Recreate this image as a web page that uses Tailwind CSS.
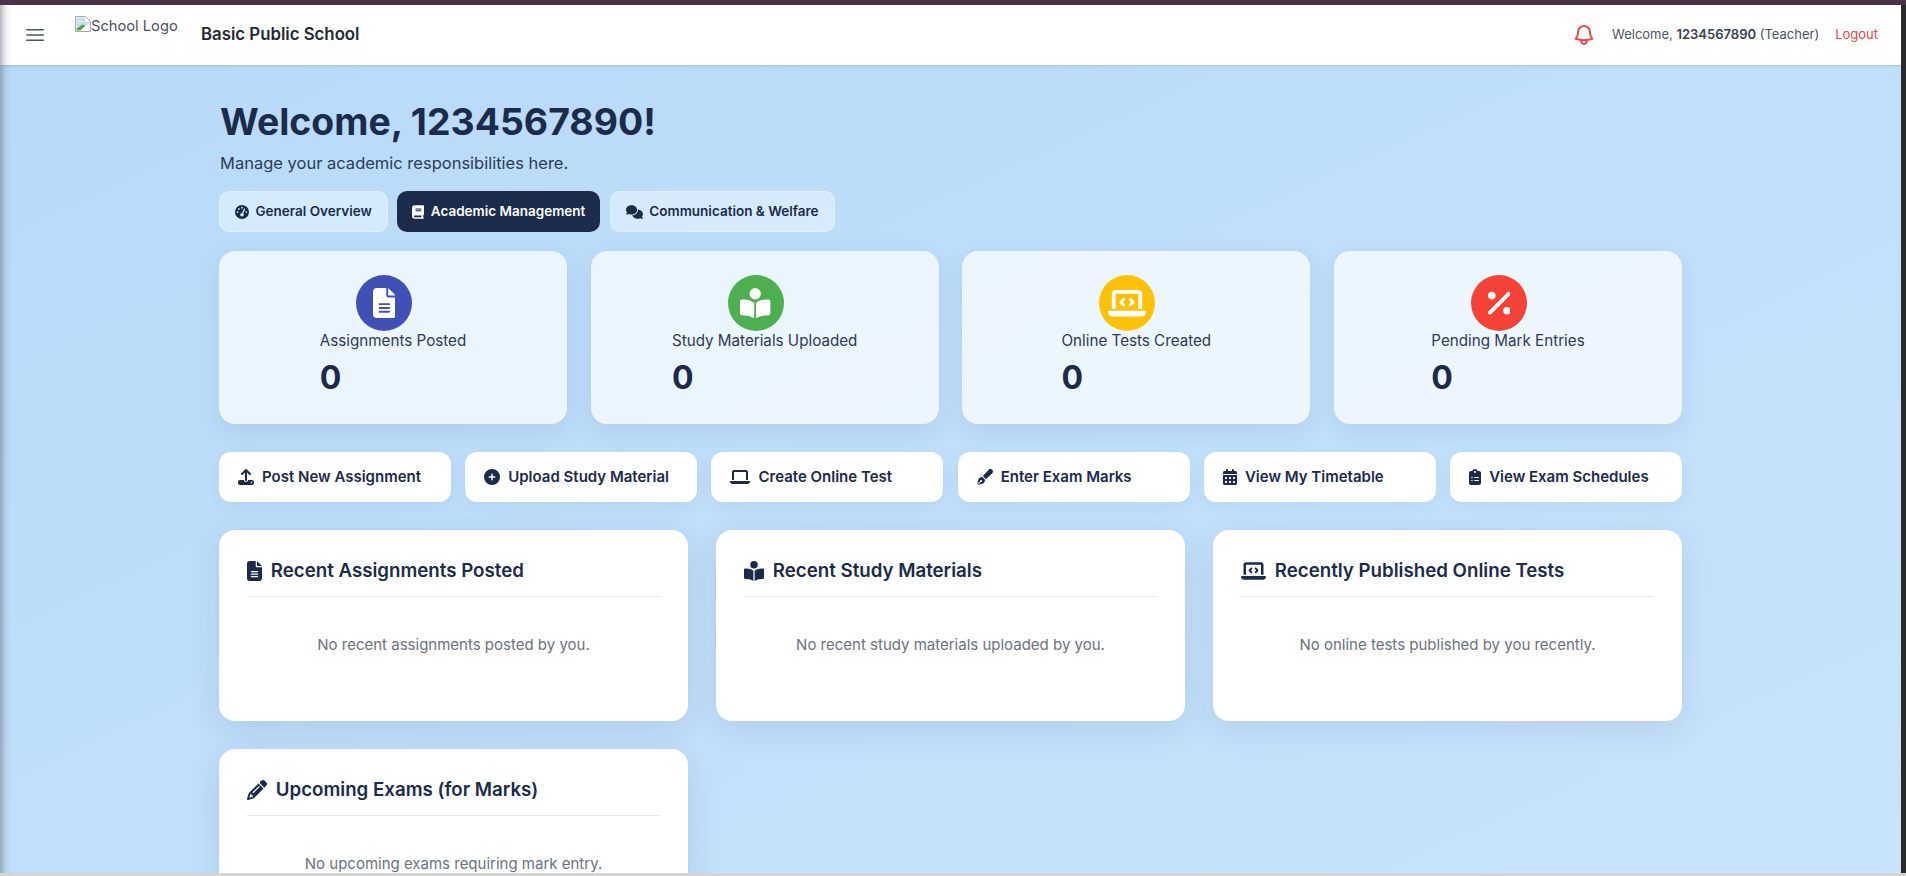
<!DOCTYPE html>
<html lang="en">
  <head>
    <meta charset="UTF-8" />
    <meta name="viewport" content="width=device-width, initial-scale=1.0" />
    <script src="https://cdn.jsdelivr.net/npm/@tailwindcss/browser@4"></script>
    <title>Teacher Dashboard</title>
  </head>
  <body class="h-screen overflow-hidden bg-[#2b2b2b] font-['Inter',sans-serif]">
    <div class="h-[5px] bg-[#4a3349]"></div>
    <div class="flex h-[868px] pr-[5px]">
      <div class="relative flex-1 overflow-hidden bg-gradient-to-br from-[#b6daf9] to-[#c8e4fc]">
        <div class="absolute inset-y-0 left-0 z-20 w-[12px] bg-gradient-to-r from-gray-500/50 via-gray-500/10 to-transparent"></div>

        <!-- Top bar -->
        <header class="relative z-10 flex h-[60px] items-center justify-between bg-white pl-[22.5px] pr-[23px] shadow-sm">
          <div class="flex h-full items-center">
            <svg class="h-6 w-6 text-[#4b5563]" fill="none" viewBox="0 0 24 24" stroke="currentColor" stroke-width="1.5">
              <path stroke-linecap="round" stroke-linejoin="round" d="M3.75 6.75h16.5M3.75 12h16.5m-16.5 5.25h16.5" />
            </svg>
            <div class="ml-[28.5px] flex h-full w-[126px] items-start pt-[11px] text-[14.7px] leading-[20px] text-[#4b5563]">
              <svg class="h-4 w-4 shrink-0" viewBox="0 0 16 16">
                <path d="M.5.5h10l5 5v10H.5z" fill="#fff" stroke="#a8a8a8" />
                <path d="M1.5 1.5h8.5v4.5h4.5v2L1.5 12z" fill="#c5dcf7" />
                <path d="M1.5 14.5v-2l6-4 3 1-5 5z" fill="#4fa63a" />
                <path d="M3 6c1-1.6 3.4-1.6 4.5 0z" fill="#fff" />
              </svg>
              <span>School Logo</span>
            </div>
            <span class="text-[16.8px] font-semibold text-[#1f2937]">Basic Public School</span>
          </div>
          <div class="flex items-center">
            <svg class="h-6 w-6 text-[#ef4444]" fill="none" viewBox="0 0 24 24" stroke="currentColor" stroke-width="2">
              <path stroke-linecap="round" stroke-linejoin="round" d="M14.857 17.082a23.848 23.848 0 005.454-1.31A8.967 8.967 0 0118 9.75v-.7V9A6 6 0 006 9v.75a8.967 8.967 0 01-2.312 6.022c1.733.64 3.56 1.085 5.455 1.31m5.714 0a24.255 24.255 0 01-5.714 0m5.714 0a3 3 0 11-5.714 0" />
            </svg>
            <span class="ml-4 text-[13px] text-[#4b5563]">Welcome, <b class="font-semibold text-[#374151]">1234567890</b> (Teacher)</span>
            <a class="ml-4 text-[13px] text-[#ef4444]">Logout</a>
          </div>
        </header>

        <!-- Main -->
        <main class="mx-auto w-[1463px] pt-[33px]">
          <h1 class="pl-px text-[37.4px] font-bold leading-[48px] text-[#1a2b4c]">Welcome, 1234567890!</h1>
          <p class="mt-[5px] pl-px text-[16.5px] leading-[24px] text-[#2d3a5a]">Manage your academic responsibilities here.</p>

          <div class="mt-[16px] flex gap-[9.6px]">
            <button class="flex h-[41px] items-center gap-[6.4px] rounded-[10px] border border-white/30 bg-white/40 px-[15px] text-[13.5px] font-semibold text-[#1a2b4c]">
              <svg class="h-[14px] w-[14px]" viewBox="0 0 512 512" fill="currentColor"><path d="M0 256a256 256 0 1 1 512 0A256 256 0 1 1 0 256zM288 96a32 32 0 1 0 -64 0 32 32 0 1 0 64 0zM256 416c35.3 0 64-28.7 64-64c0-17.4-6.9-33.1-18.1-44.6L366 161.7c5.3-12.1-.2-26.3-12.3-31.6s-26.3 .2-31.6 12.3L257.9 288c-.6 0-1.3 0-1.9 0c-35.3 0-64 28.7-64 64s28.7 64 64 64zM176 144a32 32 0 1 0 -64 0 32 32 0 1 0 64 0zM96 288a32 32 0 1 0 0-64 32 32 0 1 0 0 64zm352-32a32 32 0 1 0 -64 0 32 32 0 1 0 64 0z" /></svg>
              General Overview
            </button>
            <button class="flex h-[41px] items-center gap-[6.4px] rounded-[10px] bg-[#1a2b4c] px-[15px] text-[13.5px] font-semibold text-white">
              <svg class="h-[14px] w-[12px]" viewBox="0 0 448 512" fill="currentColor"><path d="M96 0C43 0 0 43 0 96V416c0 53 43 96 96 96H384h32c17.7 0 32-14.3 32-32s-14.3-32-32-32V384c17.7 0 32-14.3 32-32V32c0-17.7-14.3-32-32-32H384 96zm0 384H352v64H96c-17.7 0-32-14.3-32-32s14.3-32 32-32zm32-240c0-8.8 7.2-16 16-16H336c8.8 0 16 7.2 16 16s-7.2 16-16 16H144c-8.8 0-16-7.2-16-16zm16 48H336c8.8 0 16 7.2 16 16s-7.2 16-16 16H144c-8.8 0-16-7.2-16-16s7.2-16 16-16z" /></svg>
              Academic Management
            </button>
            <button class="flex h-[41px] items-center gap-[6.4px] rounded-[10px] border border-white/30 bg-white/40 px-[15px] text-[13.5px] font-semibold text-[#1a2b4c]">
              <svg class="h-[14px] w-[17px]" viewBox="0 0 640 512" fill="currentColor"><path d="M208 352c114.9 0 208-78.8 208-176S322.9 0 208 0S0 78.8 0 176c0 38.6 14.7 74.3 39.6 103.4c-3.5 9.4-8.7 17.7-14.2 24.7c-4.8 6.2-9.7 11-13.3 14.3c-1.8 1.6-3.3 2.9-4.3 3.7c-.5 .4-.9 .7-1.1 .8l-.2 .2 0 0 0 0C1 327.2-1.4 334.4 .8 340.9S9.1 352 16 352c21.8 0 43.8-5.6 62.1-12.5c9.2-3.5 17.8-7.4 25.3-11.4C134.1 343.3 169.8 352 208 352zM448 176c0 112.3-99.1 196.9-216.5 207C255.8 457.4 336.4 512 432 512c38.2 0 73.9-8.7 104.7-23.9c7.5 4 16 7.9 25.2 11.4c18.3 6.9 40.3 12.5 62.1 12.5c6.9 0 13.1-4.5 15.2-11.1c2.1-6.6-.2-13.8-5.8-17.9l0 0 0 0-.2-.2c-.2-.2-.6-.4-1.1-.8c-1-.8-2.5-2-4.3-3.7c-3.6-3.3-8.5-8.1-13.3-14.3c-5.5-7-10.7-15.4-14.2-24.7c24.9-29 39.6-64.7 39.6-103.4c0-92.8-84.9-168.9-192.6-175.5c.4 5.1 .6 10.3 .6 15.5z" /></svg>
              Communication &amp; Welfare
            </button>
          </div>

          <!-- Stat cards -->
          <div class="mt-[19px] grid grid-cols-4 gap-[23.6px]">
            <div class="flex h-[173px] justify-center rounded-[16px] bg-white/70 pt-[24px] shadow-[0_8px_24px_rgba(26,43,76,0.09)]">
              <div class="flex w-fit flex-col">
                <div class="flex h-14 w-14 items-center justify-center self-center rounded-full bg-[#3f51b5] mr-[18px] text-white">
                  <svg class="h-[30.4px] w-[22.8px]" viewBox="0 0 384 512" fill="currentColor"><path d="M64 0C28.7 0 0 28.7 0 64V448c0 35.3 28.7 64 64 64H320c35.3 0 64-28.7 64-64V160H256c-17.7 0-32-14.3-32-32V0H64zM256 0V128H384L256 0zM112 256H272c8.8 0 16 7.2 16 16s-7.2 16-16 16H112c-8.8 0-16-7.2-16-16s7.2-16 16-16zm0 64H272c8.8 0 16 7.2 16 16s-7.2 16-16 16H112c-8.8 0-16-7.2-16-16s7.2-16 16-16zm0 64H272c8.8 0 16 7.2 16 16s-7.2 16-16 16H112c-8.8 0-16-7.2-16-16s7.2-16 16-16z" /></svg>
                </div>
                <span class="text-[15.2px] leading-[19px] text-[#2d3a5a]">Assignments Posted</span>
                <span class="mt-[8px] text-[32px] font-bold leading-[40px] text-[#1a2b4c]">0</span>
              </div>
            </div>
            <div class="flex h-[173px] justify-center rounded-[16px] bg-white/70 pt-[24px] shadow-[0_8px_24px_rgba(26,43,76,0.09)]">
              <div class="flex w-fit flex-col">
                <div class="flex h-14 w-14 items-center justify-center self-center rounded-full bg-[#4caf50] mr-[18px] text-white">
                  <svg class="h-[30.4px] w-[30.4px]" viewBox="0 0 512 512" fill="currentColor"><path d="M160 96a96 96 0 1 1 192 0A96 96 0 1 1 160 96zm80 152V512l-48.4-24.2c-20.9-10.4-43.5-17-66.8-19.3l-96-9.6C12.5 457.2 0 443.5 0 427V224c0-17.7 14.3-32 32-32H62.3c63.6 0 125.6 19.6 177.7 56zm32 264V248c52.1-36.4 114.1-56 177.7-56H480c17.7 0 32 14.3 32 32V427c0 16.4-12.5 30.2-28.8 31.8l-96 9.6c-23.2 2.3-45.9 8.9-66.8 19.3L272 512z" /></svg>
                </div>
                <span class="text-[15.2px] leading-[19px] text-[#2d3a5a]">Study Materials Uploaded</span>
                <span class="mt-[8px] text-[32px] font-bold leading-[40px] text-[#1a2b4c]">0</span>
              </div>
            </div>
            <div class="flex h-[173px] justify-center rounded-[16px] bg-white/70 pt-[24px] shadow-[0_8px_24px_rgba(26,43,76,0.09)]">
              <div class="flex w-fit flex-col">
                <div class="flex h-14 w-14 items-center justify-center self-center rounded-full bg-[#ffc107] mr-[18px] text-white">
                  <svg class="h-[30.4px] w-[38px]" viewBox="0 0 640 512" fill="currentColor"><path d="M64 96c0-35.3 28.7-64 64-64H512c35.3 0 64 28.7 64 64V352H512V96H128V352H64V96zM0 403.2C0 392.6 8.6 384 19.2 384H620.8c10.6 0 19.2 8.6 19.2 19.2c0 42.4-34.4 76.8-76.8 76.8H76.8C34.4 480 0 445.6 0 403.2zM281 209l-31 31 31 31c9.4 9.4 9.4 24.6 0 33.9s-24.6 9.4-33.9 0l-48-48c-9.4-9.4-9.4-24.6 0-33.9l48-48c9.4-9.4 24.6-9.4 33.9 0s9.4 24.6 0 33.9zM393 175l48 48c9.4 9.4 9.4 24.6 0 33.9l-48 48c-9.4 9.4-24.6 9.4-33.9 0s-9.4-24.6 0-33.9l31-31-31-31c-9.4-9.4-9.4-24.6 0-33.9s24.6-9.4 33.9 0z" /></svg>
                </div>
                <span class="text-[15.2px] leading-[19px] text-[#2d3a5a]">Online Tests Created</span>
                <span class="mt-[8px] text-[32px] font-bold leading-[40px] text-[#1a2b4c]">0</span>
              </div>
            </div>
            <div class="flex h-[173px] justify-center rounded-[16px] bg-white/70 pt-[24px] shadow-[0_8px_24px_rgba(26,43,76,0.09)]">
              <div class="flex w-fit flex-col">
                <div class="flex h-14 w-14 items-center justify-center self-center rounded-full bg-[#f44336] mr-[18px] text-white">
                  <svg class="h-[30.4px] w-[22.8px]" viewBox="0 0 384 512" fill="currentColor"><path d="M374.6 118.6c12.5-12.5 12.5-32.8 0-45.3s-32.8-12.5-45.3 0l-320 320c-12.5 12.5-12.5 32.8 0 45.3s32.8 12.5 45.3 0l320-320zM128 128A64 64 0 1 0 0 128a64 64 0 1 0 128 0zM384 384a64 64 0 1 0 -128 0 64 64 0 1 0 128 0z" /></svg>
                </div>
                <span class="text-[15.2px] leading-[19px] text-[#2d3a5a]">Pending Mark Entries</span>
                <span class="mt-[8px] text-[32px] font-bold leading-[40px] text-[#1a2b4c]">0</span>
              </div>
            </div>
          </div>

          <!-- Quick actions -->
          <div class="mt-[28px] grid grid-cols-6 gap-[14.4px] text-[15px] font-semibold text-[#1a2b4c]">
            <a class="flex h-[50px] items-center gap-[8px] rounded-[12px] bg-white pl-[19px] shadow-[0_4px_16px_rgba(26,43,76,0.06)]">
              <svg class="h-4 w-4" viewBox="0 0 512 512" fill="currentColor"><path d="M288 109.3V352c0 17.7-14.3 32-32 32s-32-14.3-32-32V109.3l-73.4 73.4c-12.5 12.5-32.8 12.5-45.3 0s-12.5-32.8 0-45.3l128-128c12.5-12.5 32.8-12.5 45.3 0l128 128c12.5 12.5 12.5 32.8 0 45.3s-32.8 12.5-45.3 0L288 109.3zM64 352H192c0 35.3 28.7 64 64 64s64-28.7 64-64H448c35.3 0 64 28.7 64 64v32c0 35.3-28.7 64-64 64H64c-35.3 0-64-28.7-64-64V416c0-35.3 28.7-64 64-64zM432 456a24 24 0 1 0 0-48 24 24 0 1 0 0 48z" /></svg>
              Post New Assignment
            </a>
            <a class="flex h-[50px] items-center gap-[8px] rounded-[12px] bg-white pl-[19px] shadow-[0_4px_16px_rgba(26,43,76,0.06)]">
              <svg class="h-4 w-4" viewBox="0 0 512 512" fill="currentColor"><path d="M256 512A256 256 0 1 0 256 0a256 256 0 1 0 0 512zM232 344V280H168c-13.3 0-24-10.7-24-24s10.7-24 24-24h64V168c0-13.3 10.7-24 24-24s24 10.7 24 24v64h64c13.3 0 24 10.7 24 24s-10.7 24-24 24H280v64c0 13.3-10.7 24-24 24s-24-10.7-24-24z" /></svg>
              Upload Study Material
            </a>
            <a class="flex h-[50px] items-center gap-[8px] rounded-[12px] bg-white pl-[19px] shadow-[0_4px_16px_rgba(26,43,76,0.06)]">
              <svg class="h-4 w-5" viewBox="0 0 640 512" fill="currentColor"><path d="M128 32C92.7 32 64 60.7 64 96V352h64V96H512V352h64V96c0-35.3-28.7-64-64-64H128zM19.2 384C8.6 384 0 392.6 0 403.2C0 445.6 34.4 480 76.8 480H563.2c42.4 0 76.8-34.4 76.8-76.8c0-10.6-8.6-19.2-19.2-19.2H19.2z" /></svg>
              Create Online Test
            </a>
            <a class="flex h-[50px] items-center gap-[8px] rounded-[12px] bg-white pl-[19px] shadow-[0_4px_16px_rgba(26,43,76,0.06)]">
              <svg class="h-4 w-4" viewBox="0 0 512 512" fill="currentColor"><path d="M79.18 282.94a32.005 32.005 0 0 0-20.24 20.24L0 480l4.69 4.69 92.89-92.89c-.66-2.56-1.57-5.03-1.57-7.8 0-17.67 14.33-32 32-32s32 14.33 32 32-14.33 32-32 32c-2.77 0-5.24-.91-7.8-1.57l-92.89 92.89L32 512l176.82-58.94a31.983 31.983 0 0 0 20.24-20.24l33.07-84.07-98.88-98.88-84.07 33.07zM369.25 28.32L186.14 227.81l97.85 97.85 199.49-183.11c34.89-31.98 36.06-86.81 2.56-120.31-33.5-33.51-88.34-32.34-120.79 2.08z" /></svg>
              Enter Exam Marks
            </a>
            <a class="flex h-[50px] items-center gap-[8px] rounded-[12px] bg-white pl-[19px] shadow-[0_4px_16px_rgba(26,43,76,0.06)]">
              <svg class="h-4 w-[14px]" viewBox="0 0 448 512" fill="currentColor"><path d="M128 0c17.7 0 32 14.3 32 32V64H288V32c0-17.7 14.3-32 32-32s32 14.3 32 32V64h48c26.5 0 48 21.5 48 48v48H0V112C0 85.5 21.5 64 48 64H96V32c0-17.7 14.3-32 32-32zM0 192H448V464c0 26.5-21.5 48-48 48H48c-26.5 0-48-21.5-48-48V192zm64 80v32c0 8.8 7.2 16 16 16h32c8.8 0 16-7.2 16-16V272c0-8.8-7.2-16-16-16H80c-8.8 0-16 7.2-16 16zm128 0v32c0 8.8 7.2 16 16 16h32c8.8 0 16-7.2 16-16V272c0-8.8-7.2-16-16-16H208c-8.8 0-16 7.2-16 16zm144-16c-8.8 0-16 7.2-16 16v32c0 8.8 7.2 16 16 16h32c8.8 0 16-7.2 16-16V272c0-8.8-7.2-16-16-16H336zM64 400v32c0 8.8 7.2 16 16 16h32c8.8 0 16-7.2 16-16V400c0-8.8-7.2-16-16-16H80c-8.8 0-16 7.2-16 16zm144-16c-8.8 0-16 7.2-16 16v32c0 8.8 7.2 16 16 16h32c8.8 0 16-7.2 16-16V400c0-8.8-7.2-16-16-16H208zm112 16v32c0 8.8 7.2 16 16 16h32c8.8 0 16-7.2 16-16V400c0-8.8-7.2-16-16-16H336c-8.8 0-16 7.2-16 16z" /></svg>
              View My Timetable
            </a>
            <a class="flex h-[50px] items-center gap-[8px] rounded-[12px] bg-white pl-[19px] shadow-[0_4px_16px_rgba(26,43,76,0.06)]">
              <svg class="h-4 w-3" viewBox="0 0 384 512" fill="currentColor"><path d="M192 0c-41.8 0-77.4 26.7-90.5 64H64C28.7 64 0 92.7 0 128V448c0 35.3 28.7 64 64 64H320c35.3 0 64-28.7 64-64V128c0-35.3-28.7-64-64-64H282.5C269.4 26.7 233.8 0 192 0zm0 64a32 32 0 1 1 0 64 32 32 0 1 1 0-64zM72 272a24 24 0 1 1 48 0 24 24 0 1 1 -48 0zm104-16H304c8.8 0 16 7.2 16 16s-7.2 16-16 16H176c-8.8 0-16-7.2-16-16s7.2-16 16-16zM72 368a24 24 0 1 1 48 0 24 24 0 1 1 -48 0zm88 0c0-8.8 7.2-16 16-16H304c8.8 0 16 7.2 16 16s-7.2 16-16 16H176c-8.8 0-16-7.2-16-16z" /></svg>
              View Exam Schedules
            </a>
          </div>

          <!-- Recent lists -->
          <div class="mt-[28px] grid grid-cols-3 gap-[28px]">
            <section class="h-[191px] rounded-[16px] bg-white px-[28px] pt-[28px] shadow-[0_8px_32px_rgba(26,43,76,0.1)]">
              <h3 class="flex h-[26px] items-center gap-[8.8px] text-[18.7px] font-semibold text-[#1a2b4c]">
                <svg class="h-5 w-[15px]" viewBox="0 0 384 512" fill="currentColor"><path d="M64 0C28.7 0 0 28.7 0 64V448c0 35.3 28.7 64 64 64H320c35.3 0 64-28.7 64-64V160H256c-17.7 0-32-14.3-32-32V0H64zM256 0V128H384L256 0zM112 256H272c8.8 0 16 7.2 16 16s-7.2 16-16 16H112c-8.8 0-16-7.2-16-16s7.2-16 16-16zm0 64H272c8.8 0 16 7.2 16 16s-7.2 16-16 16H112c-8.8 0-16-7.2-16-16s7.2-16 16-16zm0 64H272c8.8 0 16 7.2 16 16s-7.2 16-16 16H112c-8.8 0-16-7.2-16-16s7.2-16 16-16z" /></svg>
                Recent Assignments Posted
              </h3>
              <div class="mt-[12px] border-t border-[#e5e7eb] pt-[38px] text-center text-[15px] leading-[20px] text-[#6b7280]">No recent assignments posted by you.</div>
            </section>
            <section class="h-[191px] rounded-[16px] bg-white px-[28px] pt-[28px] shadow-[0_8px_32px_rgba(26,43,76,0.1)]">
              <h3 class="flex h-[26px] items-center gap-[8.8px] text-[18.7px] font-semibold text-[#1a2b4c]">
                <svg class="h-5 w-5" viewBox="0 0 512 512" fill="currentColor"><path d="M160 96a96 96 0 1 1 192 0A96 96 0 1 1 160 96zm80 152V512l-48.4-24.2c-20.9-10.4-43.5-17-66.8-19.3l-96-9.6C12.5 457.2 0 443.5 0 427V224c0-17.7 14.3-32 32-32H62.3c63.6 0 125.6 19.6 177.7 56zm32 264V248c52.1-36.4 114.1-56 177.7-56H480c17.7 0 32 14.3 32 32V427c0 16.4-12.5 30.2-28.8 31.8l-96 9.6c-23.2 2.3-45.9 8.9-66.8 19.3L272 512z" /></svg>
                Recent Study Materials
              </h3>
              <div class="mt-[12px] border-t border-[#e5e7eb] pt-[38px] text-center text-[15px] leading-[20px] text-[#6b7280]">No recent study materials uploaded by you.</div>
            </section>
            <section class="h-[191px] rounded-[16px] bg-white px-[28px] pt-[28px] shadow-[0_8px_32px_rgba(26,43,76,0.1)]">
              <h3 class="flex h-[26px] items-center gap-[8.8px] text-[18.7px] font-semibold text-[#1a2b4c]">
                <svg class="h-5 w-[25px]" viewBox="0 0 640 512" fill="currentColor"><path d="M64 96c0-35.3 28.7-64 64-64H512c35.3 0 64 28.7 64 64V352H512V96H128V352H64V96zM0 403.2C0 392.6 8.6 384 19.2 384H620.8c10.6 0 19.2 8.6 19.2 19.2c0 42.4-34.4 76.8-76.8 76.8H76.8C34.4 480 0 445.6 0 403.2zM281 209l-31 31 31 31c9.4 9.4 9.4 24.6 0 33.9s-24.6 9.4-33.9 0l-48-48c-9.4-9.4-9.4-24.6 0-33.9l48-48c9.4-9.4 24.6-9.4 33.9 0s9.4 24.6 0 33.9zM393 175l48 48c9.4 9.4 9.4 24.6 0 33.9l-48 48c-9.4 9.4-24.6 9.4-33.9 0s-9.4-24.6 0-33.9l31-31-31-31c-9.4-9.4-9.4-24.6 0-33.9s24.6-9.4 33.9 0z" /></svg>
                Recently Published Online Tests
              </h3>
              <div class="mt-[12px] border-t border-[#e5e7eb] pt-[38px] text-center text-[15px] leading-[20px] text-[#6b7280]">No online tests published by you recently.</div>
            </section>
            <section class="h-[191px] rounded-[16px] bg-white px-[28px] pt-[28px] shadow-[0_8px_32px_rgba(26,43,76,0.1)]">
              <h3 class="flex h-[26px] items-center gap-[8.8px] text-[18.7px] font-semibold text-[#1a2b4c]">
                <svg class="h-5 w-5" viewBox="0 0 512 512" fill="currentColor"><path d="M410.3 231l11.3-11.3-33.9-33.9-62.1-62.1L291.7 89.8l-11.3 11.3-22.6 22.6L58.6 322.9c-10.4 10.4-18 23.3-22.2 37.4L1 480.7c-2.5 8.4-.2 17.5 6.1 23.7s15.3 8.5 23.7 6.1l120.3-35.4c14.1-4.2 27-11.8 37.4-22.2L387.7 253.7 410.3 231zM160 399.4l-9.1 22.7c-4 3.1-8.5 5.4-13.3 6.9L59.4 452l23-78.1c1.4-4.9 3.8-9.4 6.9-13.3l22.7-9.1v32c0 8.8 7.2 16 16 16h32zM362.7 18.7L348.3 33.2 325.7 55.8 314.3 67.1l33.9 33.9 62.1 62.1 33.9 33.9 11.3-11.3 22.6-22.6 14.5-14.5c25-25 25-65.5 0-90.5L453.3 18.7c-25-25-65.5-25-90.5 0zm-47.4 168l-144 144c-6.2 6.2-16.4 6.2-22.6 0s-6.2-16.4 0-22.6l144-144c6.2-6.2 16.4-6.2 22.6 0s6.2 16.4 0 22.6z" /></svg>
                Upcoming Exams (for Marks)
              </h3>
              <div class="mt-[12px] border-t border-[#e5e7eb] pt-[38px] text-center text-[15px] leading-[20px] text-[#6b7280]">No upcoming exams requiring mark entry.</div>
            </section>
          </div>
        </main>
      </div>
    </div>
    <div class="h-[3px] bg-[#d4d4d4]"></div>
  </body>
</html>
